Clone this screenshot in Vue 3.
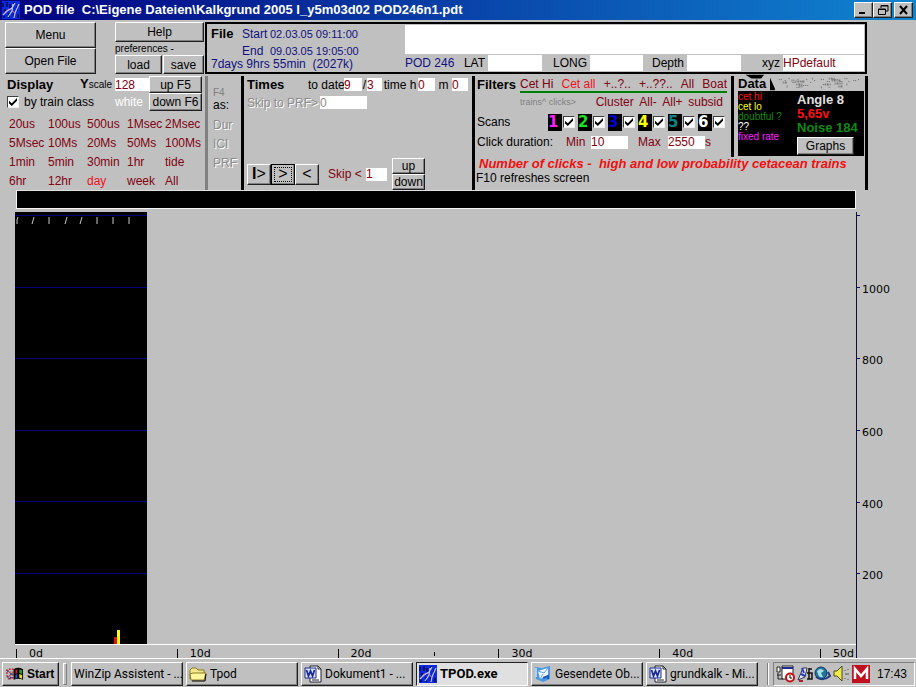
<script setup>
import { ref } from 'vue'

const scales = ['20us', '100us', '500us', '1Msec', '2Msec', '5Msec', '10Ms', '20Ms', '50Ms', '100Ms',
  '1min', '5min', '30min', '1hr', 'tide', '6hr', '12hr', 'day', 'week', 'All']
const activeScale = ref('day')
const trainFilters = ['Cet Hi', 'Cet all', '+..?..', '+..??..', 'All', 'Boat']
const activeFilter = ref('Cet all')
const clickFilters = ['Cluster', 'All-', 'All+', 'subsid']
const scans = ref([
  { n: 1, tone: 'magenta', on: true },
  { n: 2, tone: 'green', on: true },
  { n: 3, tone: 'blue', on: true },
  { n: 4, tone: 'yellow', on: true },
  { n: 5, tone: 'teal', on: true },
  { n: 6, tone: 'white', on: true },
])
const byClass = ref(true)
const yLabels = ['', '1000', '800', '600', '400', '200']
const xLabels = ['0d', '10d', '20d', '30d', '40d', '50d']
const tasks = [
  { text: 'WinZip Assistent - ...', icon: '' },
  { text: 'Tpod', icon: 'folder' },
  { text: 'Dokument1 - ...', icon: 'word' },
  { text: 'TPOD.exe', icon: 'pod', active: true },
  { text: 'Gesendete Ob...', icon: 'mail' },
  { text: 'grundkalk - Mi...', icon: 'word' },
]
</script>

<template>
  <div class="screen">
    <header class="titlebar">
      <svg class="logo" viewBox="0 0 18 18" aria-hidden="true">
        <rect width="18" height="18" fill="#0a2be0" />
        <path d="M1 2v4M3 8v5M5 1v5M8 3v4M12 1v3M15 5v5M7 12v5M12 11v5M16 13v4M2 14v3" stroke="#001070" stroke-width="2" />
        <path d="M1 14l4-4l5-3l3-5M6 16l4-6l1-7M12 17l1-5l4-9" stroke="#c9c4e8" stroke-width="1.2" fill="none" />
        <path d="M3 11l4-3M10 9l3 4" stroke="#e08a90" />
      </svg>
      <h1>POD file &nbsp;C:\Eigene Dateien\Kalkgrund 2005 I_y5m03d02 POD246n1.pdt</h1>
      <div class="window-buttons">
        <button class="btn" aria-label="Minimize"><svg viewBox="0 0 14 12"><path d="M2 9h6" stroke="#000" stroke-width="2" /></svg></button>
        <button class="btn" aria-label="Restore"><svg viewBox="0 0 14 12"><path d="M5 4V1.5h7V7h-2M5 2h7M2.5 5h7v5.5h-7zM2 5.5h8" fill="none" stroke="#000" /></svg></button>
        <button class="btn close" aria-label="Close"><svg viewBox="0 0 14 12"><path d="M3 2l7 8M10 2l-7 8" stroke="#000" stroke-width="2" /></svg></button>
      </div>
    </header>

    <section class="top">
      <div class="main-buttons">
        <button class="btn">Menu</button>
        <button class="btn">Open File</button>
      </div>
      <div class="help">
        <button class="btn">Help</button>
        <span class="pref">preferences -</span>
        <div class="pref-buttons">
          <button class="btn">load</button>
          <button class="btn">save</button>
        </div>
      </div>
      <div class="file">
        <div class="file-info">
          <h2>File</h2>
          <span>Start</span><span class="stamp">02.03.05 09:11:00</span>
          <span class="col2">End</span><span class="stamp">09.03.05 19:05:00</span>
          <span class="wide">7days 9hrs 55min&nbsp; (2027k)</span>
        </div>
        <div class="file-meta">
          <textarea aria-label="Notes"></textarea>
          <div class="meta-row">
            <span class="pod">POD 246</span>
            <label for="lat">LAT</label><input id="lat" />
            <label for="long">LONG</label><input id="long" />
            <label for="depth">Depth</label><input id="depth" />
            <label for="xyz">xyz</label><input id="xyz" class="maroon" value="HPdefault" />
          </div>
        </div>
      </div>
    </section>

    <section class="panels">
      <div class="display">
        <div class="display-head">
          <h2>Display</h2>
          <label for="yscale" class="yscale"><b>Y</b>scale</label>
          <input id="yscale" class="maroon" value="128" />
          <button class="btn">up F5</button>
          <label class="class-check"><input type="checkbox" class="check" v-model="byClass" />by train class</label>
          <span class="white">white</span>
          <button class="btn">down F6</button>
        </div>
        <div class="scales">
          <button v-for="s in scales" :key="s" class="flat" :class="{ active: s === activeScale }" @click="activeScale = s">{{ s }}</button>
        </div>
      </div>

      <div class="as">
        <span class="f4">F4</span>
        <span class="as-label">as:</span>
        <div class="as-list">
          <button class="flat" disabled>Dur</button>
          <button class="flat" disabled>ICI</button>
          <button class="flat" disabled>PRF</button>
        </div>
      </div>

      <div class="times">
        <div class="date-row">
          <h2>Times</h2>
          <label for="day">to date</label><input id="day" class="maroon" value="9" />
          <label for="month">/</label><input id="month" class="maroon" value="3" />
          <label for="hour">time h</label><input id="hour" class="maroon" value="0" />
          <label for="minute">m</label><input id="minute" class="maroon" value="0" />
        </div>
        <div class="prf-row">
          <label for="prf" class="disabled">Skip to PRF&gt;</label>
          <input id="prf" value="0" disabled />
        </div>
        <div class="nav-row">
          <div class="nav-buttons">
            <button class="btn"><b>I</b>&gt;</button>
            <button class="btn focus">&gt;</button>
            <button class="btn">&lt;</button>
          </div>
          <label for="skip" class="maroon">Skip &lt;</label>
          <input id="skip" class="maroon" value="1" />
          <div class="updown">
            <button class="btn">up</button>
            <button class="btn">down</button>
          </div>
        </div>
      </div>

      <div class="right">
        <div class="right-top">
          <div class="filters">
            <div class="filter-row">
              <h2>Filters</h2>
              <div class="filter-list">
                <button v-for="f in trainFilters" :key="f" class="flat" :class="{ active: f === activeFilter }" @click="activeFilter = f">{{ f }}</button>
              </div>
            </div>
            <div class="click-row">
              <span class="hint">trains^ clicks&gt;</span>
              <button v-for="c in clickFilters" :key="c" class="flat">{{ c }}</button>
            </div>
            <div class="scan-row">
              <span>Scans</span>
              <label v-for="s in scans" :key="s.n" class="scan">
                <b :class="s.tone">{{ s.n }}</b>
                <input type="checkbox" class="check" v-model="s.on" />
              </label>
            </div>
            <div class="duration-row">
              <span>Click duration:</span>
              <label for="min" class="maroon">Min</label><input id="min" class="maroon" value="10" />
              <label for="max" class="maroon">Max</label><input id="max" class="maroon" value="2550" />
              <span class="maroon">s</span>
            </div>
          </div>
          <div class="data">
            <div class="data-head">
              <h2>Data</h2>
              <svg viewBox="0 0 96 14" aria-hidden="true">
                <path d="M-25 -2h19l-3 4h-10zM0 1L5 12V14H0z" fill="#000" />
                <path d="M9 3h3M15 4h1M19 2h2M23 6h3M28 3h1M31 5h4M37 3h2M41 6h2M45 4h1M52 3h3M58 5h4M64 3h5M71 5h3M76 2h3M80 5h2M85 4h4M90 3h2M54 8h3M60 11h2M27 11h4M34 9h5" stroke="#666" stroke-dasharray="1 1" />
                <path d="M13 6h4M22 4h3M27 8h6M26 5h9M30 10h3M56 8h7M60 2h6M66 7h8M70 10h5M63 4h10M78 8h2M43 2h2M52 11h1M17 10h2" stroke="#777" stroke-width="2" stroke-dasharray="1 1 2 1" />
              </svg>
            </div>
            <div class="data-box">
              <ul>
                <li class="red">cet hi</li>
                <li class="yellow">cet lo</li>
                <li class="dark-green">doubtful ?</li>
                <li class="white">??</li>
                <li class="magenta">fixed rate</li>
              </ul>
              <div class="readings">
                <b class="pale">Angle 8</b>
                <b class="red">5,65v</b>
                <b class="dark-green">Noise 184</b>
                <button class="btn">Graphs</button>
              </div>
            </div>
          </div>
        </div>
        <p class="notice">Number of clicks -&nbsp; high and low probability cetacean trains</p>
        <p class="refresh">F10 refreshes screen</p>
      </div>
    </section>

    <div class="strip"></div>

    <main class="chart">
      <div class="plot">
        <div class="recorded">
          <div v-for="(l, i) in yLabels" :key="i" class="band">
            <svg v-if="i === 0" class="marks" viewBox="0 0 132 10" aria-hidden="true">
              <path d="M2 8V4L3 1M17 8L19 1M34 1v7M50 8L52 1M65 8L67 1M82 1v7M98 1v7M114 1v7" fill="none" stroke="#c8c8c8" />
            </svg>
            <svg v-if="i === 5" class="bars" viewBox="0 0 132 14" aria-hidden="true">
              <path d="M99 7h4v7h-4z" fill="#e01000" />
              <path d="M102 0h3v14h-3z" fill="#ffff00" />
            </svg>
          </div>
        </div>
      </div>
      <div class="y-axis">
        <div v-for="(l, i) in yLabels" :key="i" class="y-tick"><i></i><span>{{ l }}</span></div>
      </div>
      <div class="x-axis">
        <div v-for="l in xLabels" :key="l" class="x-tick"><i></i><span>{{ l }}</span><i v-if="l === '20d'" class="half"></i></div>
      </div>
      <div class="axis-end"></div>
    </main>

    <footer class="taskbar">
      <button class="btn start">
        <svg viewBox="0 0 19 14" aria-hidden="true">
          <path d="M0 3h2M3 2h2M6 2h2M0 6h2M3 5h2M6 5h2M0 9h2M3 9h2M6 8h2M2 12h3M6 11h2" stroke="#c03030" stroke-width="1.5" />
          <path d="M1 4h2M4 7h3M1 10h2M4 11h2" stroke="#303090" stroke-width="1.5" />
          <path d="M8 2q5-3 10 0v11q-5-2-10 0z" fill="#000" />
          <path d="M10 3l2-1v4l-2 1z" fill="#e02020" /><path d="M14 2l3 1v4l-3-1z" fill="#20a020" />
          <path d="M10 8l2-1v4l-2 1z" fill="#3050e0" /><path d="M14 7l3 1v4l-3-1z" fill="#e8e020" />
        </svg>
        <b>Start</b>
      </button>
      <div class="grip"></div>
      <div class="tasks">
        <button v-for="t in tasks" :key="t.text" class="btn task" :class="{ pressed: t.active }">
          <svg v-if="t.icon === 'folder'" viewBox="0 0 18 16" aria-hidden="true">
            <path d="M1 13V4l2-2h4l2 2h6v3" fill="#f4e888" stroke="#8a7a20" />
            <path d="M4 7h13l-2 7H2L1 8z" fill="#fff6a0" stroke="#8a7a20" /><path d="M3 15h13l1-7" fill="none" stroke="#000" />
          </svg>
          <svg v-else-if="t.icon === 'word'" viewBox="0 0 18 18" aria-hidden="true">
            <path d="M6 1h8l3 3v13H6z" fill="#fff" stroke="#223" /><path d="M14 1v3h3M8 15h7" fill="none" stroke="#223" />
            <path d="M1 3h11v10H1z" fill="#dfe4ff" stroke="#1a2a90" /><path d="M2.5 5l2 6L6.5 6l2 5L10.500 5" fill="none" stroke="#1a2a90" stroke-width="1.8" />
          </svg>
          <svg v-else-if="t.icon === 'pod'" viewBox="0 0 18 18" aria-hidden="true">
            <rect width="18" height="18" fill="#0a2be0" />
            <path d="M1 2v4M3 8v5M5 1v5M8 3v4M12 1v3M15 5v5M7 12v5M12 11v5M16 13v4M2 14v3" stroke="#001070" stroke-width="2" />
            <path d="M1 14l4-4l5-3l3-5M6 16l4-6l1-7M12 17l1-5l4-9" stroke="#c9c4e8" stroke-width="1.2" fill="none" />
            <path d="M3 11l4-3M10 9l3 4" stroke="#e08a90" />
          </svg>
          <svg v-else-if="t.icon === 'mail'" viewBox="0 0 18 18" aria-hidden="true">
            <path d="M1 2l7 1 8-2v13l-7 3-7-3z" fill="#4a98e4" /><path d="M4 6l10-3v8l-8 3z" fill="#f2f8ff" />
            <path d="M4 6l6 2 4-5M6 14l3-5" fill="none" stroke="#5aa0e8" /><path d="M9 13l5-2v3" fill="none" stroke="#1c5cb8" stroke-width="2" />
            <path d="M2 3v9" stroke="#a8d4f8" stroke-width="2" />
          </svg>
          <span>{{ t.text }}</span>
        </button>
      </div>
      <div class="divider"></div>
      <div class="tray">
        <svg class="tray-icons" viewBox="0 0 94 18" aria-hidden="true">
          <path d="M1 2h3v5H1zM6 1h11v13H6z" fill="#fff" stroke="#222" /><path d="M6 2h11v2H6z" fill="#1a2a90" /><path d="M2 8v6h5M1 10h4" fill="none" stroke="#222" />
          <circle cx="14" cy="12.5" r="4" fill="#fff" stroke="#c01010" stroke-width="2" /><path d="M14 10v3h2" fill="none" stroke="#000" />
          <path d="M22 15l5-12h4l-2 9z" fill="#e8e8f4" stroke="#334" /><path d="M26 3l2 5M25 9l4 2" stroke="#2038c0" stroke-width="2" /><path d="M33 3v11M31 8h5v6h-5M33 4h3" fill="none" stroke="#111" stroke-width="1.5" /><path d="M23 16h4" stroke="#b02030" stroke-width="2" />
          <circle cx="45" cy="8" r="6" fill="#1a78a0" stroke="#203060" /><path d="M41 6q4-4 7 0l-3 2 2 4q-4 1-5-3z" fill="#a9dce0" /><path d="M40 12q7 5 14-1l-2-4" fill="none" stroke="#223a80" stroke-width="2" />
          <path d="M58 6h3l5-5v15l-5-5h-3z" fill="#f0ea50" stroke="#4a4a10" /><path d="M69 5v1M69 9h4M69 13v1M72 4v1M72 14v1" stroke="#555" />
          <path d="M76 0h18v18H76z" fill="#c01020" /><path d="M79 14V4l6 7 6-7v10" fill="none" stroke="#fff" stroke-width="2.5" />
        </svg>
        <time>17:43</time>
      </div>
    </footer>
  </div>
</template>

<style>
body { margin: 0; background: #c0c0c0; }
</style>

<style scoped>
* { box-sizing: border-box; }
.screen {
  display: flex; flex-direction: column; min-height: 100vh; background: #c0c0c0; color: #000;
  font: 12px/14px "Liberation Sans", Arial, sans-serif; white-space: nowrap;
}
h1, h2, p, ul { margin: 0; padding: 0; }
h2 { font-size: 13px; line-height: 16px; }
button, input, textarea { font: inherit; color: inherit; border: 0; border-radius: 0; padding: 0; margin: 0; min-width: 0; outline: 0; }
input, textarea { background: #fff; height: 13px; width: 100%; }
textarea { resize: none; display: block; }
.maroon { color: #800010; }
.btn {
  background: #c0c0c0; display: flex; align-items: center; justify-content: center;
  border: 1px solid; border-color: #fff #202020 #202020 #fff; box-shadow: inset -1px -1px #808080;
}
.flat { background: none; text-align: left; color: #800010; }
.flat.active { color: #f01020; }
.flat:disabled, .disabled { color: #8c8c8c; text-shadow: 1px 1px #fff; }
.check { appearance: none; width: 12px; height: 12px; border: 1px solid; border-color: #404040 #eee #eee #404040; display: grid; flex: none; }
.check:checked::before { content: ""; background: #000; margin: 1px; clip-path: polygon(0 35%, 35% 65%, 100% 0, 100% 35%, 35% 100%, 0 70%); }

.titlebar { display: flex; align-items: center; gap: 4px; height: 20px; padding: 0 3px 0 2px; background: linear-gradient(90deg, #000080, #1084d0); color: #fff; }
.logo { width: 18px; height: 18px; }
h1 { flex: 1; font-size: 13px; line-height: 18px; }
.window-buttons { display: flex; }
.window-buttons .btn { width: 19px; height: 16px; }
.window-buttons .close { margin-left: 2px; }
.window-buttons svg { width: 14px; height: 12px; flex: none; }

.top { display: grid; grid-template-columns: 91px 109px 1fr; padding: 2px 49px 0 5px; height: 56px; }
.main-buttons { display: grid; grid-template-rows: 1fr 1fr; height: 52px; }
.help { display: grid; grid-template-rows: 20px 13px 19px; margin-left: 19px; width: 89px; }
.pref { font-size: 10px; line-height: 13px; }
.pref-buttons { display: grid; grid-template-columns: 47px 1fr; gap: 1px; }
.file { display: grid; grid-template-columns: 198px 1fr; border: 2px solid #000; height: 52px; }
.file-info { display: grid; grid-template-columns: 31px 28px 1fr; grid-template-rows: 20px 14px 12px; align-items: center; padding-left: 4px; color: #101080; }
.file-info h2 { color: #000; }
.stamp { font-size: 11px; }
.col2 { grid-column: 2; }
.wide { grid-column: 1 / -1; }
.file-meta { padding: 1px 1px 0 0; }
.file-meta textarea { height: 29px; }
.meta-row { display: grid; grid-template-columns: 56px 27px 54px 48px 53px 44px 54px 42px 1fr; margin-top: 1px; align-items: center; }
.meta-row input { height: 16px; }
.meta-row label { text-align: right; padding-right: 3px; }
.pod { color: #101080; }

.panels { display: grid; grid-template-columns: 205px 36px 231px 1fr; padding-right: 48px; height: 112px; }
.display-head { display: grid; grid-template-columns: 73px 35px 34px 53px; grid-template-rows: 17px 18px; align-items: center; padding-left: 7px; }
.display-head .btn { height: 100%; }
.yscale { font-size: 10px; }
.yscale b { font-size: 13px; }
.class-check { grid-column: 1 / 3; display: flex; align-items: center; gap: 5px; }
.scales { display: grid; grid-template-columns: 39px 39px 40px 38px 1fr; grid-auto-rows: 19px; padding: 3px 0 0 9px; }
.as { border-left: 3px solid #808080; padding: 11px 0 0 5px; display: flex; flex-direction: column; }
.f4 { font-size: 10px; line-height: 12px; color: #808080; }
.as-label { line-height: 12px; }
.as-list { display: grid; grid-auto-rows: 19px; margin-top: 4px; }

.times { border-left: 3px solid #000; padding-left: 3px; display: flex; flex-direction: column; }
.date-row { display: grid; grid-template-columns: 61px 36px 18px 5px 15px 36px 17px 17px 16px; align-items: center; height: 17px; }
.date-row label { text-align: center; }
.prf-row { display: grid; grid-template-columns: 73px 47px; align-items: center; height: 19px; }
.prf-row input:disabled { color: #8c8c8c; }
.nav-row { display: flex; align-items: center; margin-top: auto; height: 32px; }
.nav-buttons { display: grid; grid-template-columns: repeat(3, 24px); height: 21px; font-size: 16px; margin-right: 9px; }
.focus { border-color: #000; outline: 1px dotted #000; outline-offset: -4px; }
.nav-row input { width: 21px; margin: 0 5px; }
.nav-row label { width: 33px; }
.updown { display: grid; grid-template-rows: 1fr 1fr; width: 33px; height: 32px; }

.right { border-left: 3px solid #000; border-right: 3px solid #000; }
.right-top { display: grid; grid-template-columns: 256px 1fr; height: 81px; }
.filters { padding-left: 2px; }
.filter-row { display: grid; grid-template-columns: 43px 207px; height: 17px; align-items: center; }
.filter-list { display: flex; justify-content: space-between; border-bottom: 2px solid #008000; height: 17px; }
.click-row { display: flex; justify-content: space-between; align-items: center; height: 17px; padding: 0 8px 0 43px; }
.hint { font-size: 9px; color: #808080; width: 70px; }
.scan-row { display: grid; grid-template-columns: 71px repeat(6, 30px); align-items: center; height: 24px; }
.scan { display: flex; align-items: center; gap: 1px; }
.scan b { width: 14px; height: 17px; font: bold 15px/17px "DejaVu Sans", sans-serif; background: #000; text-align: left; }
.duration-row { display: grid; grid-template-columns: 89px 25px 37px 10px 30px 37px 1fr; align-items: center; height: 16px; }
.duration-row label[for="max"] { grid-column: 5; }
.magenta { color: #ff20ff; }
.green { color: #20e020; }
.blue { color: #0000d0; }
.yellow { color: #ffff00; }
.teal { color: #108080; }
.white { color: #fff; }
.red { color: #ff1010; }
.dark-green { color: #108a10; }
.pale { color: #e0e0e0; }
.data { border-left: 3px solid #000; padding: 0 1px 0 4px; }
.data-head { display: grid; grid-template-columns: 32px 1fr; height: 15px; }
.data-head svg { width: 100%; height: 15px; overflow: visible; }
.data-box { display: grid; grid-template-columns: 59px 1fr; background: #000; height: 65px; }
ul { list-style: none; font-size: 10px; line-height: 10px; padding-top: 1px; }
.readings { display: flex; flex-direction: column; font-size: 13px; line-height: 14px; padding-top: 2px; }
.readings .btn { width: 57px; height: 18px; margin-top: 2px; font-size: 12px; }
.notice { width: 0; padding-left: 4px; color: #f01010; font: italic bold 13px/14px "Liberation Sans", Arial, sans-serif; }
.refresh { padding-left: 1px; line-height: 15px; }

.strip { height: 19px; margin: 2px 60px 3px 16px; background: #000; border: 1px solid #f4f4f4; border-top-color: #e0e0e0; }

.chart { flex: 1; display: grid; grid-template-columns: 1fr 60px; grid-template-rows: 1fr 13px; padding-left: 15px; font: 11px/13px "DejaVu Sans", sans-serif; }
.plot { border-bottom: 1px solid #fff; display: flex; }
.recorded { width: 15.7%; background: #000; display: grid; grid-template-rows: repeat(6, 1fr); padding-top: 3px; }
.band { border-top: 1px solid #000078; display: flex; flex-direction: column; }
.marks, .bars { width: 100%; display: block; }
.bars { margin-top: auto; }
.y-axis { border-left: 1px solid #101030; padding-top: 3px; display: grid; grid-template-rows: repeat(6, 1fr); }
.y-tick { display: flex; align-items: flex-start; gap: 2px; }
.y-tick i { width: 3px; border-top: 1px solid #101060; }
.y-tick span { margin-top: -4px; }
.x-axis { display: grid; grid-template-columns: repeat(5, 161fr) 36fr; padding: 2px 0 0 1px; }
.x-tick { display: flex; align-items: center; gap: 12px; }
.x-tick i { width: 1px; height: 9px; background: #000; flex: none; }
.x-tick .half { height: 4px; margin-left: 50px; }
.axis-end { border-left: 1px solid #101030; }

.taskbar { display: flex; align-items: center; gap: 4px; height: 29px; padding: 1px 1px 0 2px; border-top: 1px solid #fff; }
.taskbar .btn { height: 24px; justify-content: flex-start; gap: 3px; padding: 0 3px; }
.taskbar .btn svg { width: 18px; height: 18px; flex: none; }
.start { width: 57px; }
.grip { width: 4px; height: 22px; border: 1px solid; border-color: #fff #808080 #808080 #fff; }
.tasks { flex: 1; display: grid; grid-template-columns: repeat(6, 1fr); gap: 3px; font-family: Roboto, "Liberation Sans", sans-serif; }
.taskbar .task { padding: 0 2px; }
.taskbar .pressed { border-color: #202020 #fff #fff #202020; box-shadow: none; background: #e0e0e0; font-weight: bold; font-size: 13px; }
.divider { width: 2px; height: 22px; background: #fff; border-left: 1px solid #808080; margin-left: 5px; }
.tray { width: 142px; height: 24px; display: flex; align-items: center; justify-content: space-between; padding: 0 7px 0 2px; border: 1px solid; border-color: #808080 #fff #fff #808080; }
.tray-icons { width: 94px; height: 18px; }
</style>
